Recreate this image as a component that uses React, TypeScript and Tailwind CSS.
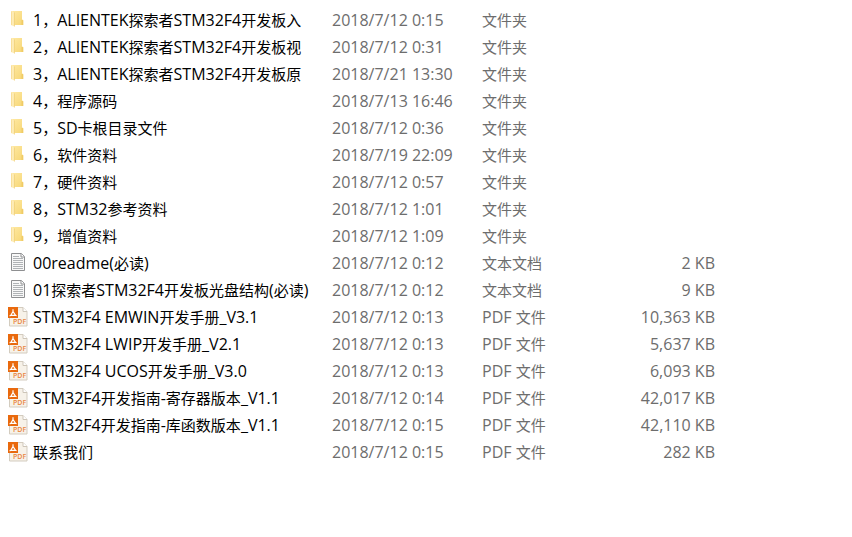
type Kind = 'folder' | 'text' | 'pdf';

interface Entry {
  name: string;
  modified: string;
  kind: Kind;
  size?: string;
}

const typeLabels: Record<Kind, string> = {
  folder: '文件夹',
  text: '文本文档',
  pdf: 'PDF 文件',
};

const entries: Entry[] = [
  { name: '1，ALIENTEK探索者STM32F4开发板入', modified: '2018/7/12 0:15', kind: 'folder' },
  { name: '2，ALIENTEK探索者STM32F4开发板视', modified: '2018/7/12 0:31', kind: 'folder' },
  { name: '3，ALIENTEK探索者STM32F4开发板原', modified: '2018/7/21 13:30', kind: 'folder' },
  { name: '4，程序源码', modified: '2018/7/13 16:46', kind: 'folder' },
  { name: '5，SD卡根目录文件', modified: '2018/7/12 0:36', kind: 'folder' },
  { name: '6，软件资料', modified: '2018/7/19 22:09', kind: 'folder' },
  { name: '7，硬件资料', modified: '2018/7/12 0:57', kind: 'folder' },
  { name: '8，STM32参考资料', modified: '2018/7/12 1:01', kind: 'folder' },
  { name: '9，增值资料', modified: '2018/7/12 1:09', kind: 'folder' },
  { name: '00readme(必读)', modified: '2018/7/12 0:12', kind: 'text', size: '2 KB' },
  { name: '01探索者STM32F4开发板光盘结构(必读)', modified: '2018/7/12 0:12', kind: 'text', size: '9 KB' },
  { name: 'STM32F4 EMWIN开发手册_V3.1', modified: '2018/7/12 0:13', kind: 'pdf', size: '10,363 KB' },
  { name: 'STM32F4 LWIP开发手册_V2.1', modified: '2018/7/12 0:13', kind: 'pdf', size: '5,637 KB' },
  { name: 'STM32F4 UCOS开发手册_V3.0', modified: '2018/7/12 0:13', kind: 'pdf', size: '6,093 KB' },
  { name: 'STM32F4开发指南-寄存器版本_V1.1', modified: '2018/7/12 0:14', kind: 'pdf', size: '42,017 KB' },
  { name: 'STM32F4开发指南-库函数版本_V1.1', modified: '2018/7/12 0:15', kind: 'pdf', size: '42,110 KB' },
  { name: '联系我们', modified: '2018/7/12 0:15', kind: 'pdf', size: '282 KB' },
];

function FolderIcon() {
  return (
    <svg className="h-5 w-5" viewBox="0 0 20 20" aria-hidden="true">
      <defs>
        <linearGradient id="folder-front" x1="0" y1="0" x2="1" y2="0">
          <stop offset="0" stopColor="#f6d787" />
          <stop offset="0.5" stopColor="#fff0c0" />
          <stop offset="1" stopColor="#fbe39c" />
        </linearGradient>
        <linearGradient id="folder-back" x1="0" y1="0" x2="1" y2="1">
          <stop offset="0" stopColor="#ffe9a2" />
          <stop offset="1" stopColor="#f6d675" />
        </linearGradient>
      </defs>
      <path d="M4 1h10v8.500l1.200.5v5H6z" fill="url(#folder-back)" />
      <path d="M13.500 10l1.700.3V15h-1.700z" fill="#f0cb66" />
      <path d="M3 1l3.500 1.500v14L3 15z" fill="url(#folder-front)" />
      <path d="M6.500 2.500v14" stroke="#edcb72" strokeWidth="0.6" />
    </svg>
  );
}

function TextIcon() {
  return (
    <svg className="h-5 w-5" viewBox="0 0 20 20" aria-hidden="true">
      <path d="M3.500.5h10l3 3v14h-13z" fill="#f8f8f8" stroke="#8e8f91" />
      <path d="M13 .5v3.500h3.500" fill="#fff" stroke="#8e8f91" />
      <path d="M5 3.500h6M5 5.500h10M5 7.500h10M5 9.500h10M5 11.500h10M5 13.500h10M5 15.500h10" stroke="#b0b3b6" />
    </svg>
  );
}

function PdfIcon() {
  return (
    <svg className="h-5 w-5" viewBox="0 0 20 20" aria-hidden="true">
      <path d="M1.500.5h13.500l4 4v14.500H1.500z" fill="#f7f2e9" stroke="#d3ccbf" />
      <path d="M15 .5v4h4" fill="#fff" stroke="#cdc5b8" />
      <path d="M0 0h10v11H0z" fill="#e9690d" />
      <path d="M5 2.200v2.300L2.800 8.300h4.800L5 4.500M2.800 8.300l-1.200.7M7.600 8.300l1 .4" fill="none" stroke="#fff" strokeWidth="1.200" />
      <text x="5" y="17" fill="#e9853f" className="font-['Open_Sans',sans-serif] text-[7px] font-semibold">
        PDF
      </text>
    </svg>
  );
}

function EntryIcon({ kind }: { kind: Kind }) {
  if (kind === 'folder') return <FolderIcon />;
  if (kind === 'text') return <TextIcon />;
  return <PdfIcon />;
}

// Latin runs are set one pixel larger than the Chinese around them
function MixedText({ text }: { text: string }) {
  return (
    <span>
      {text.split(/([\x20-\x7e]+)/).map((run, i) =>
        i % 2 ? (
          <span key={i} className="text-[16px]">
            {run}
          </span>
        ) : (
          run
        ),
      )}
    </span>
  );
}

export default function App() {
  return (
    <main className="min-h-screen bg-white pt-[7px] font-['Open_Sans','Noto_Sans_CJK_SC',sans-serif] text-[15px] leading-[27px]">
      <table className="w-full table-fixed border-collapse whitespace-nowrap text-left text-[#6d6d6d]">
        <colgroup>
          <col className="w-[332px]" />
          <col className="w-[150px]" />
          <col className="w-[113px]" />
          <col className="w-[120px]" />
          <col />
        </colgroup>
        <tbody>
          {entries.map((entry) => (
            <tr key={entry.name} className="h-[27px]">
              <td className="p-0">
                <div className="flex h-[27px] items-start gap-[5px] pl-2 text-black">
                  <span className="shrink-0 pt-[3px]">
                    <EntryIcon kind={entry.kind} />
                  </span>
                  <MixedText text={entry.name} />
                </div>
              </td>
              <td className="p-0 text-[16px] leading-[27px]">{entry.modified}</td>
              <td className="p-0">
                <div className="h-[27px]">
                  <MixedText text={typeLabels[entry.kind]} />
                </div>
              </td>
              <td className="p-0 text-right text-[16px] leading-[27px]">{entry.size}</td>
              <td className="p-0" />
            </tr>
          ))}
        </tbody>
      </table>
    </main>
  );
}
